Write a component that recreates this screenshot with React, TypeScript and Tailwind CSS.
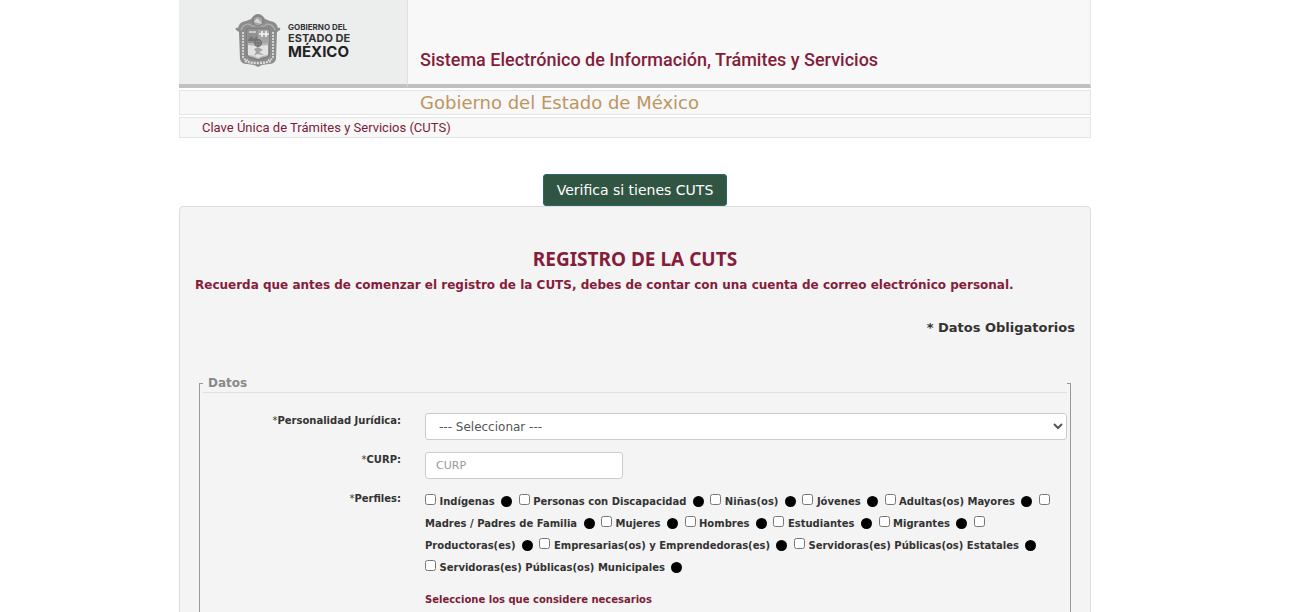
const PERFILES = [
  "Indígenas",
  "Personas con Discapacidad",
  "Niñas(os)",
  "Jóvenes",
  "Adultas(os) Mayores",
  "Madres / Padres de Familia",
  "Mujeres",
  "Hombres",
  "Estudiantes",
  "Migrantes",
  "Productoras(es)",
  "Empresarias(os) y Emprendedoras(es)",
  "Servidoras(es) Públicas(os) Estatales",
  "Servidoras(es) Públicas(os) Municipales",
]

function Escudo() {
  return (
    <svg viewBox="0 0 46 54" className="w-[46px] h-[54px] shrink-0" aria-hidden="true">
      <path
        d="M3 14C1 13 0 15 1 16L4 18L5 45Q6 50 12 50L19 51L23 53L27 51L34 50Q40 50 41 45L42 18L45 16Q46 13 43 14Q42 8 35 7L30 5Q27 0 23 0Q19 0 16 5L11 7Q4 8 3 14Z"
        fill="#8c8c8c"
      />
      <path d="M6 16Q8 10 14 10L17 12L29 12L32 10Q38 10 40 16" fill="none" stroke="#b5b5b5" strokeWidth="1.2" />
      <circle cx="23" cy="7" r="5" fill="#a5a5a5" stroke="#7a7a7a" />
      <path d="M19 8L22 4L25 7L27 10Z" fill="#d5d5d5" />
      <path d="M8 18V43Q9 46 13 46M38 18V43Q37 46 33 46" fill="none" stroke="#d3d3d3" strokeWidth="2" strokeDasharray="2 1" />
      <path d="M12 15H34V40Q33 44 28 44L23 46L18 44Q13 44 12 40Z" fill="#b5b6b6" stroke="#727272" />
      <path d="M12 16H23V29H12Z" fill="#909090" />
      <path d="M23 16H34V29H23Z" fill="#a3a3a3" />
      <path d="M24 20H34M27 17V23M31 17V23" stroke="#f5f5f5" strokeWidth="1.6" />
      <path d="M13 26L16 22L19 25L22 22V27H13Z" fill="#747474" />
      <path d="M14 18H21" stroke="#dddddd" strokeWidth="1.5" />
      <path d="M13 31L22 32L33 31V41Q28 41 23 44Q18 41 13 41Z" fill="#e2e2e2" />
      <path d="M19 35L23 33L28 36L24 38L29 41L22 40L19 42L21 38Z" fill="#a2a2a2" />
      <circle cx="23" cy="29" r="3.5" fill="#8c8c8c" stroke="#6a6a6a" />
      <path d="M23 26V32M20 29H26" stroke="#707070" />
      <path d="M10 47Q16 49 23 49Q30 49 36 47" fill="none" stroke="#ddd" strokeWidth="2.5" strokeDasharray="2 1" />
    </svg>
  )
}

function Header() {
  return (
    <header>
      <div className="flex">
        <div className="w-[229px] h-[88px] shrink-0 flex items-start pt-[14px] pl-14 gap-[7px] bg-[#eceeee] border-r border-r-[#e0e0e0] border-b-4 border-b-[#c0c0c0]">
          <Escudo />
          <div className="pt-2 font-[Inter,sans-serif] text-[#333] font-bold whitespace-nowrap">
            <p className="text-[8px] leading-[11px]">GOBIERNO DEL</p>
            <p className="text-[11px] leading-[11px]">ESTADO DE</p>
            <p className="text-[15px] leading-4 text-[#222]">MÉXICO</p>
          </div>
        </div>
        <div className="grow h-[88px] flex items-end pl-3 pb-3 bg-[#f8f8f8] border-r border-r-[#e5e5e5] border-b-4 border-b-[#c0c0c0]">
          <h1 className="font-[Roboto,sans-serif] font-medium text-[18px] leading-6 text-[#851c3a]">
            Sistema Electrónico de Información, Trámites y Servicios
          </h1>
        </div>
      </div>
      <div className="mt-0.5 h-[25px] flex items-center pl-[240px] bg-[#f8f8f8] border border-[#e5e5e5]">
        <p className="text-[18px] leading-6 text-[#bd955e]">Gobierno del Estado de México</p>
      </div>
      <div className="mt-0.5 h-[21px] flex items-center pl-[22px] bg-[#f8f8f8] border border-[#e5e5e5]">
        <p className="font-[Roboto,sans-serif] text-[13px] leading-5 text-[#7b1c38]">
          Clave Única de Trámites y Servicios (CUTS)
        </p>
      </div>
    </header>
  )
}

export default function App() {
  return (
    <div className="min-h-screen bg-white pr-[23px] font-['DejaVu_Sans',sans-serif] text-[#333]">
      <main className="mx-auto w-full max-w-[912px]">
        <Header />

        <div className="mt-9 flex justify-center">
          <button
            type="button"
            className="h-8 px-[13px] rounded-[3px] border border-[#2a6569] bg-[#305643] text-white text-[14px] leading-5"
          >
            Verifica si tienes CUTS
          </button>
        </div>

        <form className="rounded-t-[4px] border border-[#ddd] bg-[#f4f4f4] px-[15px] pt-10 pb-8">
          <h2 className="text-center font-['Noto_Sans',sans-serif] font-bold text-[19px] leading-6 text-[#851c3a]">
            REGISTRO DE LA CUTS
          </h2>
          <p className="mt-1 font-bold text-[12px] leading-5 text-[#851c3a]">
            Recuerda que antes de comenzar el registro de la CUTS, debes de contar con una cuenta de correo electrónico
            personal.
          </p>
          <p className="mt-[23px] text-right font-bold text-[13px] leading-5">* Datos Obligatorios</p>

          <fieldset className="mt-9 mx-1 min-w-0 border border-[#999] px-[3px] pb-6">
            <legend className="w-full pl-[5px] border-b border-[#e0e0e0] font-bold text-[12px] leading-[18px] text-[#888]">
              Datos
            </legend>

            <div className="mt-5 grid grid-cols-[198px_1fr] gap-x-6 gap-y-3 text-[10px]">
              <label htmlFor="personalidad" className="text-right font-bold leading-4">
                <span className="font-normal">*</span>Personalidad Jurídica:
              </label>
              <select
                id="personalidad"
                className="w-full h-[27px] pl-[9px] rounded-[3px] border border-[#ccc] bg-white text-[12px] text-[#555]"
              >
                <option>--- Seleccionar ---</option>
              </select>

              <label htmlFor="curp" className="text-right font-bold leading-4">
                <span className="font-normal">*</span>CURP:
              </label>
              <input
                id="curp"
                type="text"
                placeholder="CURP"
                className="w-[198px] h-[27px] px-2.5 rounded-[3px] border border-[#ccc] bg-white text-[11px] placeholder:text-[#999]"
              />

              <span id="perfiles" className="text-right font-bold leading-4">
                <span className="font-normal">*</span>Perfiles:
              </span>
              <div>
                <div role="group" aria-labelledby="perfiles" className="font-bold leading-[22px]">
                  {PERFILES.map((perfil, i) => (
                    <span key={perfil}>
                      {i === PERFILES.length - 1 && <br />}
                      <input id={`perfil-${i}`} type="checkbox" className="w-[11px] h-[11px] align-baseline" />{" "}
                      <label htmlFor={`perfil-${i}`} className="whitespace-nowrap">
                        {perfil}
                      </label>{" "}
                      <span className="inline-block w-[11px] h-[11px] mx-[3px] rounded-full bg-black align-[-2px]" />{" "}
                    </span>
                  ))}
                </div>
                <p className="mt-2.5 font-bold leading-[22px] text-[#7b1c38]">Seleccione los que considere necesarios</p>
              </div>
            </div>
          </fieldset>
        </form>
      </main>
    </div>
  )
}
